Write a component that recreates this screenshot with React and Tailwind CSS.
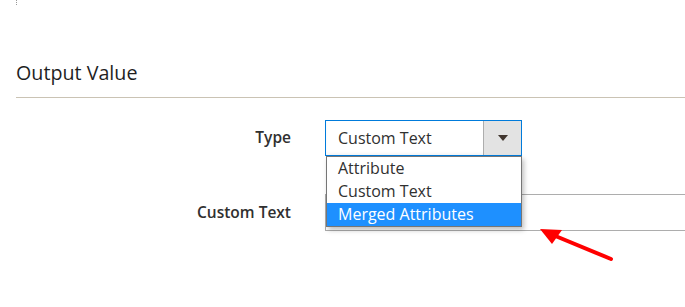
export default function App() {
  const options = ['Attribute', 'Custom Text', 'Merged Attributes'];

  return (
    <div className="relative h-[307px] w-[685px] overflow-hidden bg-white font-['Open_Sans',_'Liberation_Sans',_sans-serif] text-[#303030]">
      {/* stray dotted mark top-left */}
      <div className="ml-[16px] h-[5px] w-px border-l border-dotted border-[#999]" />

      <div className="ml-[16px] mt-[55px] border-b border-[#cac3b4] pb-[11px]">
        <h2 className="text-[19.7px] leading-[26px] font-normal text-[#1f1f1f]">Output Value</h2>
      </div>

      <div className="mt-[22px] flex flex-col gap-[38px]">
        {/* Type row */}
        <div className="flex items-center">
          <label className="w-[291px] text-right text-[15.5px] font-semibold text-[#303030]">Type</label>
          <div className="relative ml-[34px]">
            <div className="flex h-[36px] w-[197px] border border-[#007bdb] bg-white shadow-[inset_0_-2px_3px_rgba(0,0,0,0.04)]">
              <span className="flex flex-1 items-center pl-[12px] text-[16px] text-[#303030]">Custom Text</span>
              <span className="flex w-[38px] items-center justify-center border-l border-[#adadad] bg-[#e3e3e3]">
                <span className="h-0 w-0 border-x-[5px] border-t-[6px] border-x-transparent border-t-[#41362f]" />
              </span>
            </div>
            {/* open select list */}
            <div className="absolute left-[1px] top-[36px] z-10 w-[196px] border border-[#767676] bg-white shadow-[2px_3px_5px_rgba(0,0,0,0.25)]">
              {options.map((o) => (
                <div
                  key={o}
                  className={
                    o === 'Merged Attributes'
                      ? 'h-[23px] bg-[#1e90ff] pl-[11px] text-[16px] leading-[23px] text-white'
                      : 'h-[23px] pl-[11px] text-[16px] leading-[23px] text-[#303030]'
                  }
                >
                  {o}
                </div>
              ))}
            </div>
          </div>
        </div>

        {/* Custom Text row */}
        <div className="flex items-center">
          <label className="w-[291px] text-right text-[15.5px] font-semibold text-[#303030]">Custom Text</label>
          <div className="ml-[34px] h-[37px] flex-1 border border-r-0 border-[#adadad] bg-white" />
        </div>
      </div>

      {/* red annotation arrow */}
      <svg className="absolute left-0 top-0" width="685" height="307" viewBox="0 0 685 307">
        <line x1="611" y1="259" x2="553" y2="235" stroke="#ff0000" strokeWidth="4" strokeLinecap="round" />
        <polygon points="540,229 562,230 552,244" fill="#ff0000" />
      </svg>
    </div>
  );
}
